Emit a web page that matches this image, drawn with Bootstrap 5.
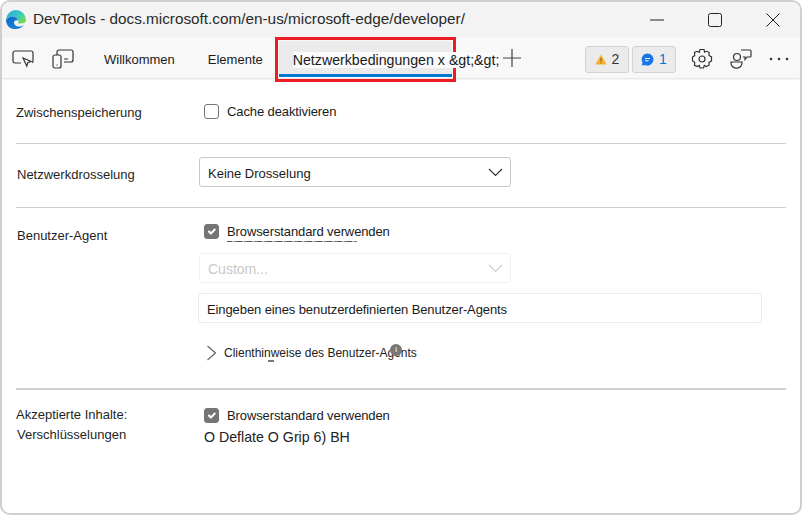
<!doctype html>
<html lang="de"><head><meta charset="utf-8"><title>DevTools</title>
<link rel="stylesheet" href="https://cdn.jsdelivr.net/npm/bootstrap@5.3.0/dist/css/bootstrap.min.css">
<style>
html,body{height:515px;overflow:hidden;background:#fff}
body{font-family:"Liberation Sans",Arial,sans-serif;font-size:13px;color:#1a1a1a}
.win{height:515px;border:2px solid #cfcfcf;border-radius:10px;overflow:hidden;background:#fff;margin:0;display:flex;flex-direction:column}
.titlebar{height:35px;background:#f3f3f3;padding-left:3px;flex:none}
.titletext{font-size:15.3px;margin-left:6px;color:#2a2a2a}
.winbtns{margin-left:auto;gap:44px;padding-right:20px}
.toolbar{height:41px;background:#f8f8f8;flex:none;box-shadow:0 1px 2px rgba(0,0,0,.14);position:relative;padding:3px 0 0 10px}
.tbicons{gap:18px;margin-right:30px}
.tabname{margin-right:33px;color:#1b1b1b;margin-top:1px}
.tabframe{width:181px;height:45px;border:3px solid #ed1c24;padding:1px 1px 2px 1px;margin-left:-21px;flex:none;position:relative}
.tabinner{height:100%;background:#ebebeb;border-bottom:3px solid #0078d4;border-radius:2px 2px 0 0;padding:9px 0 0 14px;white-space:nowrap;overflow:visible}
.tabinner span{background:#fbfbfb;font-size:14.2px;position:relative;z-index:2;color:#1a1a1a}
.plusbox{margin-left:46px;margin-top:-2px}
.counters{margin-left:auto;gap:3px;margin-right:15px}
.counter{height:27px;width:44px;background:#ebebeb;border:1px solid #d3d3d3;border-radius:3px;font-size:14px;gap:5px;padding:0;color:#333}
.infonum{color:#0078d4}
.toolright{gap:17px;margin-right:11px}
.settings{flex:1;padding:0 14px;min-height:0}
.rowblock{display:flex;border-bottom:1px solid #d0d0d0}
.lbl{width:183px;flex:none;color:#1f1f1f;padding-left:1px}
.lblflush{padding-left:0}
.lblagent{padding-top:3px}
.ctl{flex:1;min-width:0}
.sec1{height:66px;padding-top:25px}
.sec2{height:64px;padding-top:13px}
.sec3{height:182px;padding-top:15px;border-bottom-width:2px}
.sec4{padding-top:17px;border:0}
.chk{display:flex;align-items:center;gap:8px;margin-left:5px;height:17px;letter-spacing:-.11px;position:relative}
.scuffed::after{content:"";position:absolute;left:23px;top:18px;width:130px;height:1px;background:repeating-linear-gradient(90deg,#555 0 5px,#bbb 5px 7px,#777 7px 10px)}
.form-check-input.chkbox{width:15px;height:15px;margin:0;border:1px solid #767676;border-radius:3px;flex:none;box-shadow:none}
.form-check-input.chkbox:checked{background-color:#757575;border-color:#757575}
.form-select.pick{width:312px;height:30px;font-size:13px;padding:3px 30px 0 8px;border:1px solid #c8c8c8;border-radius:3px;color:#1a1a1a;box-shadow:none;background-size:15px 9px;background-position:right 7px center;font-family:inherit;background-image:url("data:image/svg+xml,%3Csvg xmlns='http://www.w3.org/2000/svg' viewBox='0 0 15 9'%3E%3Cpath d='M1 1l6.500 6.500L14 1' fill='none' stroke='%23333' stroke-width='1.200'/%3E%3C/svg%3E")}
.form-select.pick:disabled{background-color:#fff;border-color:#f0f0f0;color:#c8c8c8;opacity:1;font-size:14px;margin-top:13px;background-image:url("data:image/svg+xml,%3Csvg xmlns='http://www.w3.org/2000/svg' viewBox='0 0 15 9'%3E%3Cpath d='M1 1l6.500 6.500L14 1' fill='none' stroke='%23ccc' stroke-width='1.200'/%3E%3C/svg%3E")}
.form-control.uatext{width:564px;height:30px;font-size:13px;padding:3px 8px 0;margin:10px 0 0 -1px;border:1px solid #ececec;border-radius:3px;color:#1a1a1a;box-shadow:none;letter-spacing:-.1px}
.form-control.uatext::placeholder{color:#1a1a1a;opacity:1}
.hints{font-size:12px;margin:21px 0 0 7px;gap:7px;color:#222;position:relative}
.hints::after{content:"";position:absolute;left:62px;top:16px;width:6px;height:2px;background:#777}
.infodot{position:absolute;left:184px;top:0;width:12px;height:12px;border-radius:50%;background:#777;color:#ddd;font-size:8px;line-height:12px;text-align:center;font-weight:700}
.lblline{padding-left:1px}
.lblfirst{margin-top:-2px}
.enc{margin:3px 0 0 5px;color:#222;font-size:14.2px}
</style></head>
<body>
<div class="win">
 <div class="titlebar d-flex align-items-center">
  <svg width="22" height="22" viewBox="0 0 22 22"><defs><linearGradient id="eg1" x1="0" y1="0" x2="1" y2=".7"><stop offset="0" stop-color="#2aa9e0"/><stop offset=".6" stop-color="#36c8c0"/><stop offset="1" stop-color="#74dc50"/></linearGradient><linearGradient id="eg2" x1="0" y1="0" x2="1" y2="1"><stop offset="0" stop-color="#1466c8"/><stop offset="1" stop-color="#1a86e0"/></linearGradient></defs><path d="M1 11a10 10 0 0 1 20 0c0 2.500-2 3.500-4.500 3.500H13c.5-1 .6-2 .2-3C12 8 8 6.500 5 8 3 9 1.500 10 1 11z" fill="url(#eg1)"/><path d="M1 11c.5-1 2-2 4-3 3-1.500 7 0 8.200 3.500-2-.5-4 0-4.200 2 0 2.500 3 4.500 6.500 4 1.500-.2 2.500-.7 3.500-1.500-2 2.500-5 4-8 4C5 20.800 1 16 1 11z" fill="url(#eg2)"/></svg>
  <span class="titletext">DevTools - docs.microsoft.com/en-us/microsoft-edge/developer/</span>
  <div class="winbtns d-flex align-items-center">
   <svg width="14" height="14" viewBox="0 0 14 14"><path d="M0 7h14" stroke="#222" stroke-width="1"/></svg>
   <svg width="14" height="14" viewBox="0 0 14 14"><rect x=".5" y=".5" width="13" height="13" rx="2" fill="none" stroke="#222"/></svg>
   <svg width="14" height="14" viewBox="0 0 14 14"><path d="M.5.5l13 13M13.5.5l-13 13" stroke="#222" fill="none"/></svg>
  </div>
 </div>
 <div class="toolbar d-flex align-items-center">
  <div class="tbicons d-flex align-items-center">
   <svg width="22" height="20" viewBox="0 0 22 20" fill="none" stroke="#333" stroke-width="1.2"><path d="M9 14H3a2 2 0 0 1-2-2V4a2 2 0 0 1 2-2h16a2 2 0 0 1 2 2v8a2 2 0 0 1-1 1.700"/><path d="M11 9l8 3.500-3.200 1.200-1 3.300z"/></svg>
   <svg width="22" height="20" viewBox="0 0 22 20" fill="none" stroke="#333" stroke-width="1.2"><path d="M5 6V3a2 2 0 0 1 2-2h12a2 2 0 0 1 2 2v8a2 2 0 0 1-2 2h-7"/><rect x="1" y="6" width="8" height="13" rx="2"/><path d="M4.500 16h1M12 10h4"/></svg>
  </div>
  <span class="tabname">Willkommen</span>
  <span class="tabname">Elemente</span>
  <div class="tabframe"><div class="tabinner"><span>Netzwerkbedingungen x &amp;gt;&amp;gt;</span></div></div>
  <svg class="plusbox" width="20" height="20" viewBox="0 0 20 20"><path d="M10 1v18M1 10h18" stroke="#444" stroke-width="1.2"/></svg>
  <div class="counters d-flex align-items-center">
   <div class="counter d-flex align-items-center justify-content-center"><svg width="12" height="11" viewBox="0 0 12 11"><path d="M6 .5L11.700 10.500H.3z" fill="#f8b033"/><path d="M6 4v3.400M6 8.300v1" stroke="#7a5200"/></svg>2</div>
   <div class="counter d-flex align-items-center justify-content-center"><svg width="13" height="13" viewBox="0 0 13 13"><path d="M6.500.5a6 6 0 1 1-2.700 11.400L.8 12.500l.7-2.900A6 6 0 0 1 6.500.5z" fill="#1a73e8"/><path d="M4 5.500h5M4 7.800h3.500" stroke="#fff"/></svg><span class="infonum">1</span></div>
  </div>
  <div class="toolright d-flex align-items-center">
   <svg width="22" height="22" viewBox="0 0 22 22" fill="none" stroke="#333" stroke-width="1.2"><circle cx="11" cy="11" r="3"/><path d="M9 1.500h4l.6 2.700 2-.9 2.500 1-.1 3.100 2.500 1.500v4l-2.500 1.500.1 2.800-2.800 1.400-2-1.100-.8 2.500H9l-.7-2.500-2.100 1.100-2.700-1.300.2-3L1.500 13V9l2.200-1.400-.2-3.100 2.700-1.200 2.100 1z"/></svg>
   <svg width="22" height="22" viewBox="0 0 22 22" fill="none" stroke="#333" stroke-width="1.200"><circle cx="7" cy="9" r="3.500"/><path d="M1 14h11v1a5 5 0 0 1-5.500 5A5 5 0 0 1 1 15z"/><path d="M11 2h9a1 1 0 0 1 1 1v5a1 1 0 0 1-1 1h-3l-2 2.500V9h-2"/></svg>
   <svg width="20" height="4" viewBox="0 0 20 4" fill="#333"><circle cx="2" cy="2" r="1.300"/><circle cx="10" cy="2" r="1.300"/><circle cx="18" cy="2" r="1.300"/></svg>
  </div>
 </div>
 <div class="settings">
  <div class="rowblock sec1"><div class="lbl lblflush">Zwischenspeicherung</div><div class="ctl"><label class="chk"><input class="form-check-input chkbox" type="checkbox">Cache deaktivieren</label></div></div>
  <div class="rowblock sec2"><div class="lbl pt-2">Netzwerkdrosselung</div><div class="ctl"><select class="form-select pick"><option>Keine Drosselung</option></select></div></div>
  <div class="rowblock sec3"><div class="lbl lblagent">Benutzer-Agent</div><div class="ctl">
    <label class="chk scuffed"><input class="form-check-input chkbox" type="checkbox" checked>Browserstandard verwenden</label>
    <select class="form-select pick" disabled><option>Custom...</option></select>
    <input class="form-control uatext" placeholder="Eingeben eines benutzerdefinierten Benutzer-Agents">
    <div class="hints d-flex align-items-center"><svg width="11" height="16" viewBox="0 0 11 16"><path d="M1.500 1l8 7-8 7" fill="none" stroke="#666" stroke-width="1.200"/></svg><span>Clienthinweise des Benutzer-Agents</span><span class="infodot">i</span></div>
  </div></div>
  <div class="rowblock sec4"><div class="lbl lblflush"><div class="lblfirst">Akzeptierte Inhalte:</div><div class="lblline">Verschlüsselungen</div></div><div class="ctl">
    <label class="chk"><input class="form-check-input chkbox" type="checkbox" checked>Browserstandard verwenden</label>
    <div class="enc">O Deflate O Grip 6) BH</div>
  </div></div>
 </div>
</div>
</body></html>
